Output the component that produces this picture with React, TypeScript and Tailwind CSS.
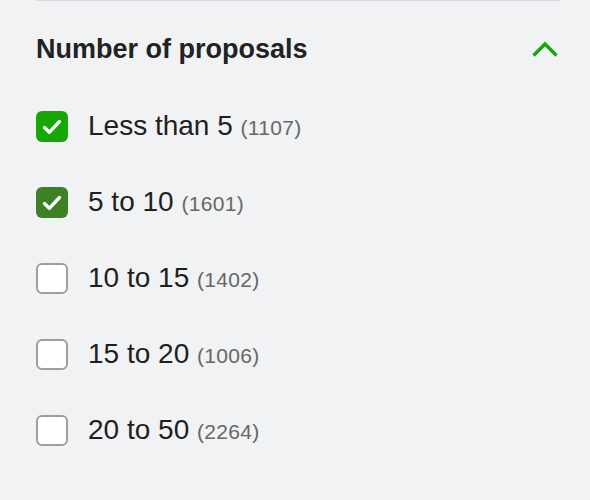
import { useState } from "react";

const options = [
  { label: "Less than 5", count: 1107, checked: true, tone: "bg-[#14a800]" },
  { label: "5 to 10", count: 1601, checked: true, tone: "bg-[#3c8224]" },
  { label: "10 to 15", count: 1402, checked: false, tone: "" },
  { label: "15 to 20", count: 1006, checked: false, tone: "" },
  { label: "20 to 50", count: 2264, checked: false, tone: "" },
];

function Check() {
  return (
    <svg viewBox="0 0 24 24" className="h-[24px] w-[24px]" fill="none" stroke="white" strokeWidth={3.4} strokeLinecap="round" strokeLinejoin="round">
      <path d="M4.5 12.5l4.8 4.8L19.5 6.5" />
    </svg>
  );
}

export default function App() {
  const [state, setState] = useState(options.map((o) => o.checked));

  return (
    <div className="min-h-[500px] w-[590px] bg-[#f1f2f4] pl-[36px] pr-[30px] font-['Liberation_Sans',Arial,sans-serif] text-[#1f1f1f]">
      <div className="border-t border-[#d9dadd]" />
      <div className="flex items-center justify-between pt-[28px]">
        <h3 className="text-[27px] font-semibold leading-[40px] text-[#222]">Number of proposals</h3>
        <svg viewBox="0 0 28 18" className="mr-[1px] h-[18px] w-[28px]" fill="none" stroke="#14a800" strokeWidth={3.4}>
          <path d="M2.5 15.5L14 4l11.5 11.5" />
        </svg>
      </div>
      <ul className="mt-[42px] flex flex-col gap-[45px]">
        {options.map((o, i) => (
          <li key={o.label}>
            <label className="flex h-[31px] cursor-pointer items-center gap-[20px]">
              <input
                type="checkbox"
                className="sr-only"
                checked={state[i]}
                onChange={() => setState((s) => s.map((v, j) => (j === i ? !v : v)))}
              />
              <span
                className={`flex h-[31px] w-[32px] shrink-0 items-center justify-center rounded-[6px] ${
                  state[i] ? o.tone || "bg-[#14a800]" : "border-2 border-[#9e9e9e] bg-white"
                }`}
              >
                {state[i] && <Check />}
              </span>
              <span className="text-[28px] leading-[31px]">
                {o.label}{" "}
                <span className="text-[21px] tracking-[0.3px] text-[#676767]">({o.count})</span>
              </span>
            </label>
          </li>
        ))}
      </ul>
    </div>
  );
}
